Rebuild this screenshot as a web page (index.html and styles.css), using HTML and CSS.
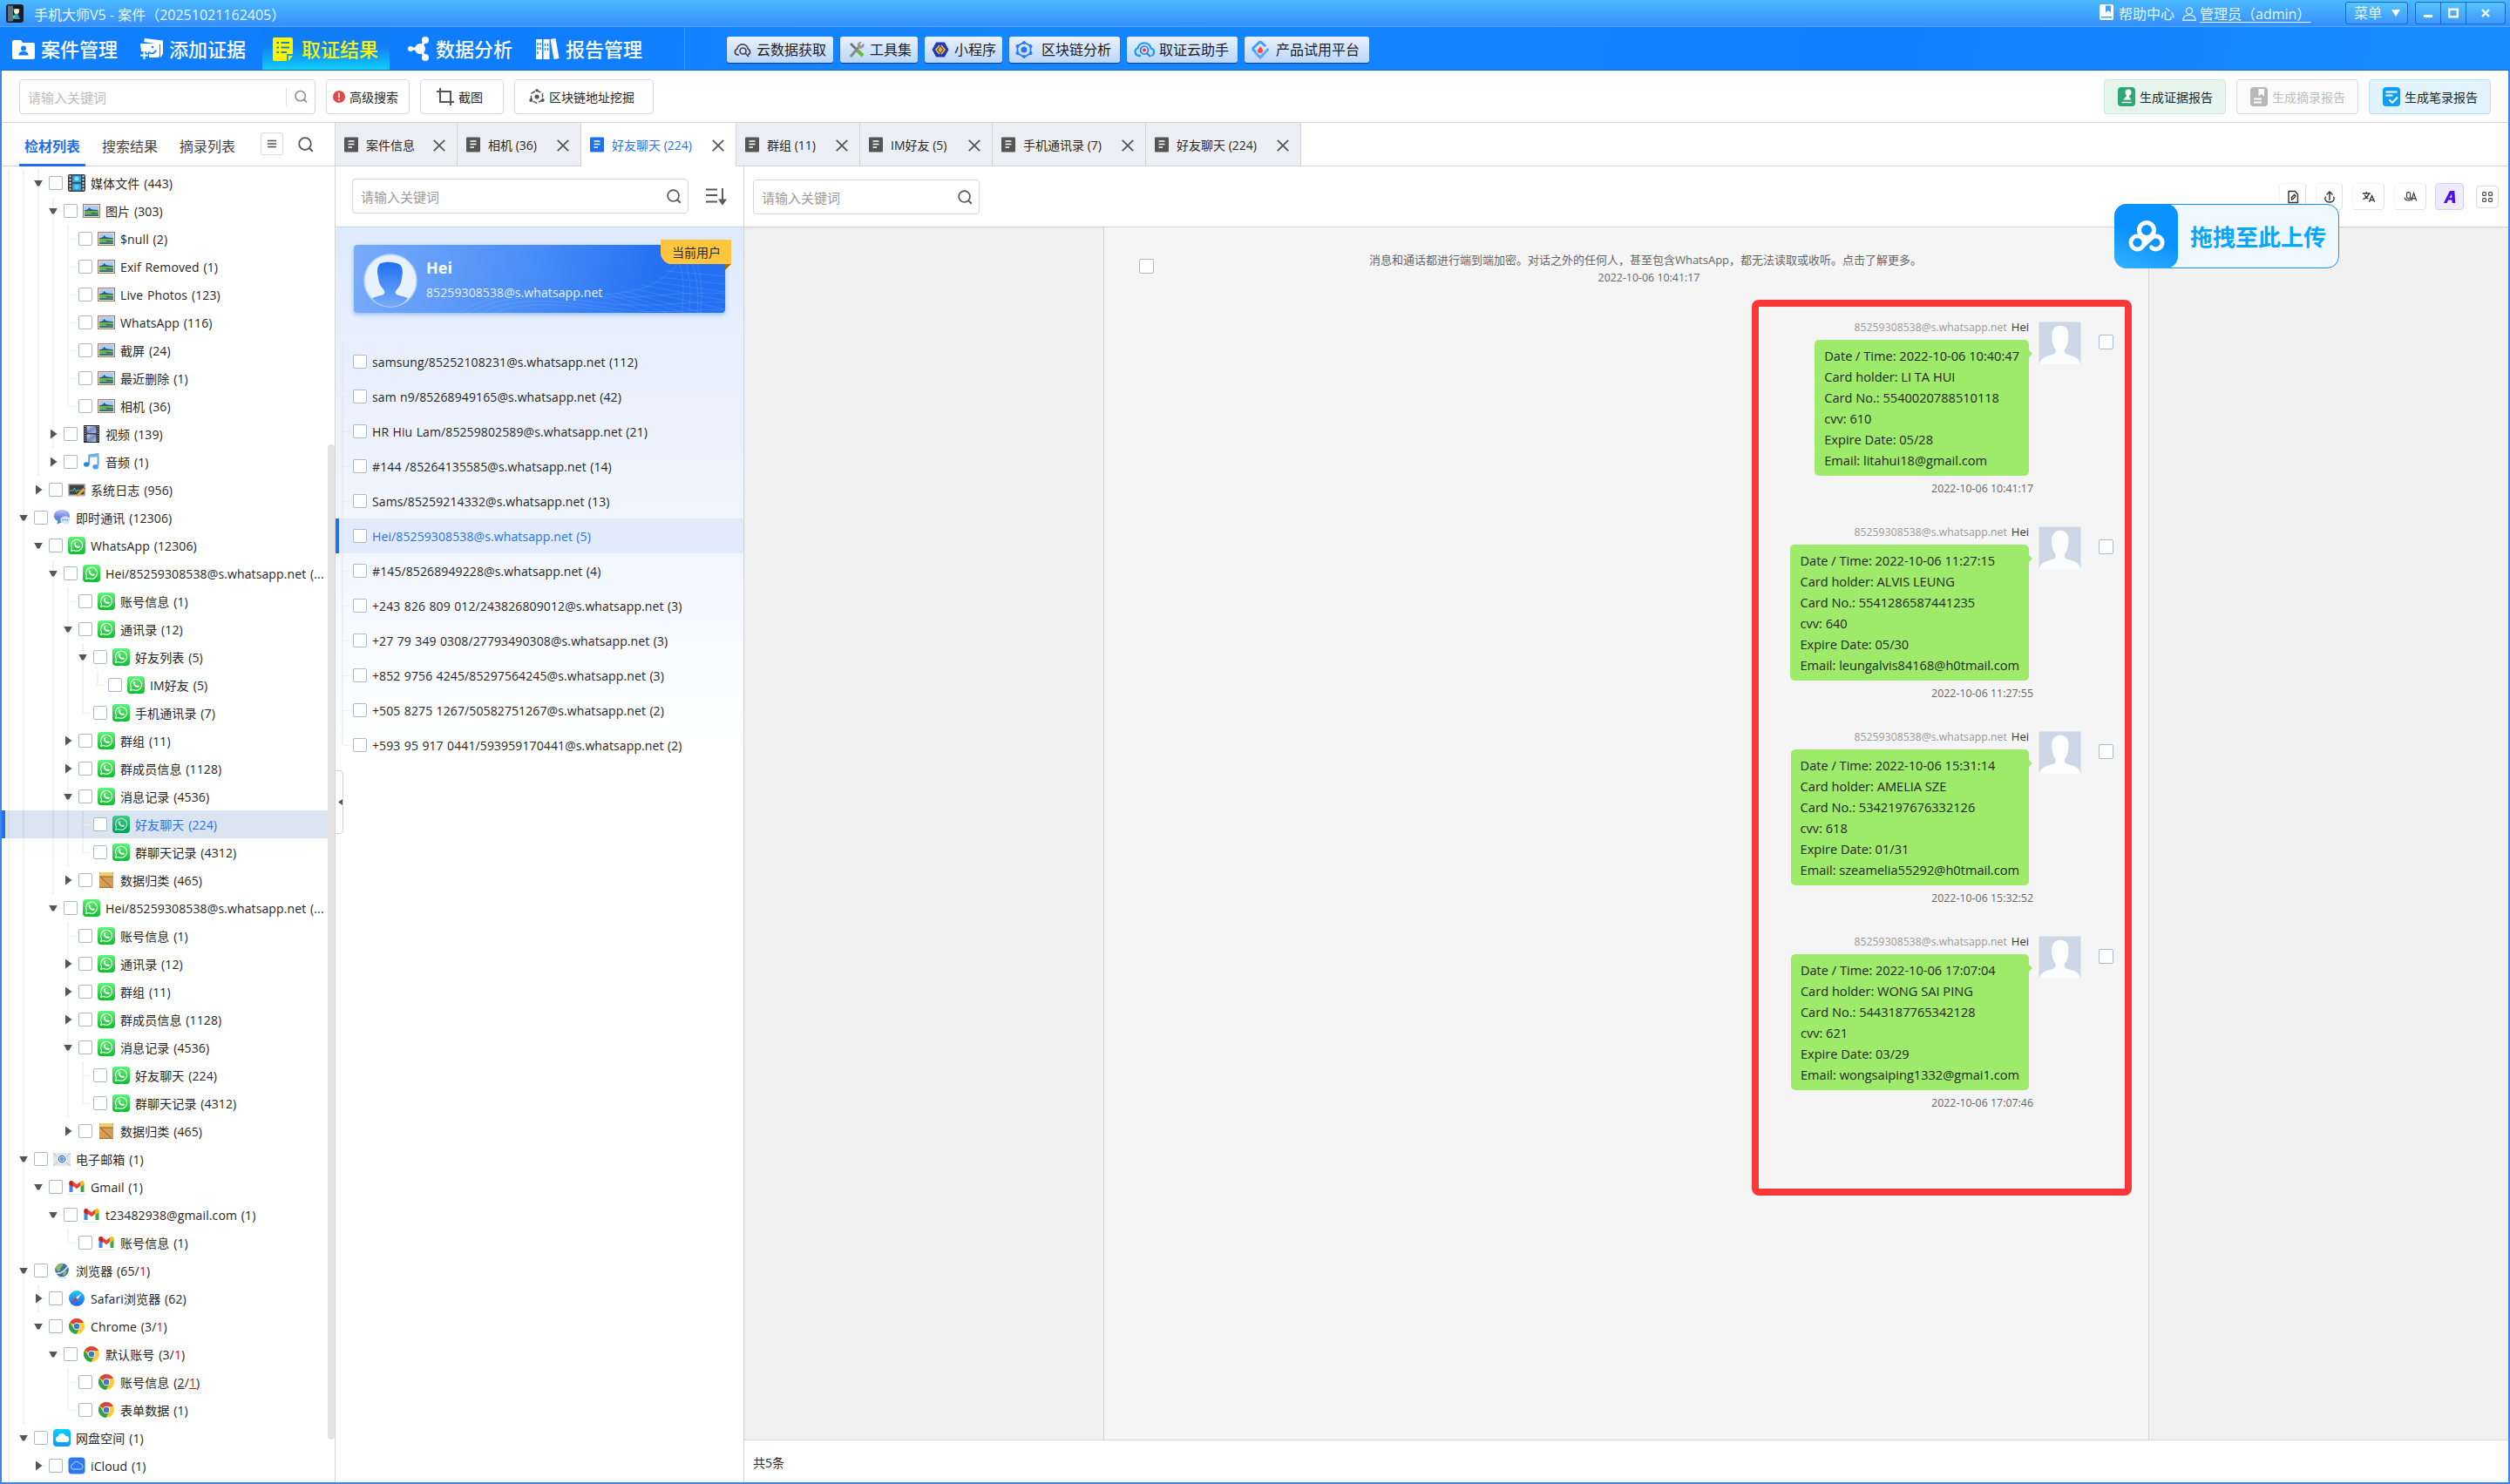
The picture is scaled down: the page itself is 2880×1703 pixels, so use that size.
FILE: index.html
```html
<!DOCTYPE html>
<html lang="zh-CN">
<head>
<meta charset="utf-8">
<title>手机大师V5</title>
<link rel="stylesheet" href="styles.css">
</head>
<body>
<svg class="defs" aria-hidden="true">
  <defs>
    <linearGradient id="gGreen" x1="0" y1="0" x2="0" y2="1"><stop offset="0" stop-color="#5df475"/><stop offset="1" stop-color="#0abf2c"/></linearGradient>
    <linearGradient id="gSafari" x1="0" y1="0" x2="0" y2="1"><stop offset="0" stop-color="#1fc8fb"/><stop offset="1" stop-color="#1d63ef"/></linearGradient>
    <linearGradient id="gCloud" x1="0" y1="0" x2="0" y2="1"><stop offset="0" stop-color="#00d2ff"/><stop offset="1" stop-color="#1296f5"/></linearGradient>
    <linearGradient id="gMan" x1="0" y1="0" x2="0" y2="1"><stop offset="0" stop-color="#1f70f2"/><stop offset="1" stop-color="#78abfb"/></linearGradient>
    <linearGradient id="gBubble" x1="0" y1="0" x2="0" y2="1"><stop offset="0" stop-color="#c3c6f7"/><stop offset=".5" stop-color="#6f86e0"/><stop offset="1" stop-color="#2f86d8"/></linearGradient>
    <linearGradient id="gFilm" x1="0" y1="0" x2="1" y2="1"><stop offset="0" stop-color="#dfe6f6"/><stop offset=".5" stop-color="#7389bd"/><stop offset="1" stop-color="#b9c6e6"/></linearGradient>
  </defs>
  <symbol id="wa" viewBox="0 0 20 20"><rect width="20" height="20" rx="4" fill="url(#gGreen)"/><path d="M3.600 16.400l.9-3.300a6.500 6.500 0 1 1 2.500 2.400z" fill="none" stroke="#fff" stroke-width="1.200" stroke-linejoin="round"/><path d="M7.700 6.300c.5-.3.9-.2 1.100.3l.5 1.200c.1.4-.6.9-.5 1.200.5 1 1.300 1.700 2.300 2.100.3.1.9-.9 1.200-.7l1.300.6c.4.2.2 1.100-.1 1.500-.6.7-1.800.8-3 .3-1.800-.8-3.500-2.500-3.800-4.300-.1-.9.4-1.900 1-2.200z" fill="#fff"/></symbol>
  <symbol id="pic" viewBox="0 0 20 20"><rect x=".5" y="2.500" width="19" height="15" fill="#cfe0ee" stroke="#ad7a5e"/><rect x="2" y="4" width="16" height="6" fill="#a9cdf3"/><path d="M2 9h2l2.500-1.500 1-1.500 1.500 1.800 3 .8 5.500.4v1H2z" fill="#35576f"/><rect x="2" y="10" width="16" height="6" fill="#69ae62"/><path d="M2 14.500h16V16H2zM11 11.800l7 1v.8H9z" fill="#2c6360"/></symbol>
  <symbol id="media" viewBox="0 0 20 20"><rect x="0" y="0" width="20" height="20" rx="2" fill="#3a3a3a"/><rect x="5" y="1.500" width="10" height="7.700" fill="#29a9ea"/><rect x="5" y="10.800" width="10" height="7.700" fill="#29a9ea"/><circle cx="10" cy="5" r="2.500" fill="#8fdcff"/><circle cx="10" cy="14.500" r="2.500" fill="#63c8fb"/><path d="M2.500 1.500v17M17.500 1.500v17" stroke="#e6e6e6" stroke-width="2" stroke-dasharray="2 1.700"/></symbol>
  <symbol id="video" viewBox="0 0 20 20"><rect x="1" y="0" width="18" height="20" fill="#1f2230"/><rect x="4.500" y="1" width="11" height="8.200" fill="url(#gFilm)"/><rect x="4.500" y="10.500" width="11" height="8.500" fill="url(#gFilm)"/><path d="M2.700 1v18M17.300 1v18" stroke="#fff" stroke-width="1" stroke-dasharray="1.300 1.300"/></symbol>
  <symbol id="audio" viewBox="0 0 20 20"><path d="M7.200 12.500V2.500L17.500 1v13" fill="none" stroke="#4aa0ec" stroke-width="1.800"/><path d="M7 2.500L17.800 1v3.200L7 5z" fill="#6bb8f4"/><ellipse cx="4.200" cy="13" rx="3.300" ry="2.700" fill="#2f83dd"/><ellipse cx="14.600" cy="15.800" rx="3.400" ry="2.800" fill="#4aa0ec"/></symbol>
  <symbol id="log" viewBox="0 0 20 20"><rect x="0" y="3" width="20" height="14.500" fill="#b9b9b9"/><rect x="1.500" y="4.500" width="17" height="11" fill="#3f4442"/><path d="M2 11h4l1.500-3 2 5 1.500-3 1 1h6" fill="none" stroke="#5fc0a0"/><path d="M9.500 18l1-3 7-7 2 2-7 7z" fill="#f0a63a"/><path d="M17.500 8l2 2 .5-1.500L18.500 7z" fill="#d55"/></symbol>
  <symbol id="im" viewBox="0 0 20 20"><path d="M10 1c5 0 9 2.600 9 6.800 0 4-3.500 6.700-8 6.900L4.500 17.500l.8-3.800C2.600 12.700.8 10.700.8 7.900.8 3.600 5 1 10 1z" fill="url(#gBubble)"/><path d="M13.800 8.500c3.500 0 5.700 1.600 5.700 4.100 0 1.500-.8 2.600-2 3.300l.8 2.700-3-1.800c-4 .3-7-1.200-7-4.200 0-2.500 2.300-4.100 5.500-4.100z" fill="#cfe3fa"/><path d="M10.500 12.600h1.500m1.200 0h1.500m1.200 0h1.500" stroke="#5a83c4" stroke-width="1.300"/></symbol>
  <symbol id="crate" viewBox="0 0 20 20"><rect x="2" y="1" width="16" height="18" fill="#d69c58"/><path d="M3 1h14l1 5H2z" fill="#f3cd68"/><path d="M2 6h16" stroke="#8d5a28" stroke-width="1"/><path d="M4 7l12 11.500" stroke="#8d5a28" stroke-width="1"/><path d="M2 18.500h16" stroke="#a56d31"/></symbol>
  <symbol id="mail" viewBox="0 0 20 20"><rect x="0" y="3" width="20" height="15" fill="#e4e7ea"/><path d="M0 3l8 8-8 7M20 3l-8 8 8 7" fill="none" stroke="#b6bcc2"/><path d="M5 6h10v8H5z" fill="#eef1f4"/><circle cx="10" cy="10" r="3.700" fill="none" stroke="#2f6fce" stroke-width="1.200"/><circle cx="10" cy="10" r="1.400" fill="none" stroke="#2f6fce" stroke-width="1.200"/></symbol>
  <symbol id="gmail" viewBox="0 0 20 20"><path d="M1.500 5v11h4V9z" fill="#4285f4"/><path d="M18.500 5v11h-4V9z" fill="#34a853"/><path d="M1.500 5.500C1.500 3 4 2.500 5.500 3.700L10 7.200l4.500-3.500v5L10 12.200 5.500 8.800v1.500l-4-3z" fill="#ea4335"/><path d="M14.500 3.700c1.500-1.200 4-.7 4 1.800v1.700l-4 3z" fill="#fbbc04"/><path d="M1.500 5.500C1.500 3 4 2.500 5.500 3.700v6.500l-4-3z" fill="#c5221f"/><path d="M0 18.500h20" stroke="#e8e8e8" stroke-width="1"/></symbol>
  <symbol id="globe" viewBox="0 0 20 20"><circle cx="10" cy="9.500" r="7.800" fill="#3b6fa5"/><path d="M3 6c2-4 6-5 8-4 1 2-1 3-2 5s-1 4-3 4-3-3-3-5zM12 10l4 1-2 4-3 1z" fill="#8fb868"/><path d="M3 13c5 1 10-2 14-8" fill="none" stroke="#dbe9f5" stroke-width="1.500"/><ellipse cx="10" cy="18" rx="5" ry="1" fill="#d5dbe2"/></symbol>
  <symbol id="safari" viewBox="0 0 20 20"><circle cx="10" cy="10" r="9" fill="url(#gSafari)"/><path d="M16 4l-5 7-2-2z" fill="#fff"/><path d="M4 16l5-7 2 2z" fill="#f22"/></symbol>
  <symbol id="chrome" viewBox="0 0 20 20"><circle cx="10" cy="10" r="9" fill="#fc3"/><path d="M10 10L2.200 5.500A9 9 0 0 1 17.800 5.500V6H10z" fill="#db4437"/><path d="M10 10l-3.600 2L2.200 5.500A9 9 0 0 0 9.500 19l3.900-7z" fill="#2fa24c"/><circle cx="10" cy="10" r="4.300" fill="#f4f4f4"/><circle cx="10" cy="10" r="3.300" fill="#3f78c8"/></symbol>
  <symbol id="pan" viewBox="0 0 20 20"><rect width="20" height="20" rx="4" fill="url(#gCloud)"/><path d="M6 15a3.400 3.400 0 0 1-.3-6.700A4.700 4.700 0 0 1 14.500 8 3.500 3.500 0 0 1 15 15z" fill="#fff"/></symbol>
  <symbol id="icloud" viewBox="0 0 20 20"><rect width="19" height="19" x=".5" y=".5" rx="4" fill="#2d78f0"/><path d="M6 14a2.900 2.900 0 0 1-.3-5.700A4.200 4.200 0 0 1 13.500 7.500 3.300 3.300 0 0 1 14.500 14z" fill="none" stroke="#b9d5ff"/></symbol>
  <symbol id="doc" viewBox="0 0 16 18"><rect y=".5" width="16" height="17" rx="1" fill="currentColor"/><path d="M4.500 5h7M4.500 8.500h7M4.500 12h4.500" stroke="#fff" stroke-width="1.500"/></symbol>
  <symbol id="x" viewBox="0 0 14 14"><path d="M.8.8l12.400 12.400M13.200.8L.8 13.200" stroke="#595959" stroke-width="1.900"/></symbol>
  <symbol id="mag" viewBox="0 0 18 18"><circle cx="8" cy="8" r="6.800" fill="none" stroke="currentColor" stroke-width="1.800"/><path d="M12.500 12.500l4.200 4.200" stroke="currentColor" stroke-width="2"/></symbol>
  <symbol id="man" viewBox="0 0 49 49"><rect x=".5" y=".5" width="48" height="48" fill="#cdd7e6" rx="1"/><path d="M1 49c.5-6 6-9 15-11 3-1 4.500-3 3.500-6-2.500-3-3.500-6-4-10.500-.6-6-.5-11 3-14.500 3.500-3 9.500-3 13 0 3.500 3.500 3.200 9 2.500 14.500-.5 4.500-1.500 7.500-4 10.500-1 3 .5 5 3.500 6 9 2 14.500 5 14.500 11z" fill="#fcfdff"/></symbol>
</svg>

<div class="app">
  <header class="titlebar">
    <svg class="logo" viewBox="0 0 20 21"><rect width="20" height="21" rx="3" fill="#111c28"/><rect x="2" y="1.500" width="6" height="18" fill="#5b6f80"/><path d="M8 5h8l-3 5 3 7H7l3-6z" fill="#2f9bb8"/><circle cx="12" cy="8" r="3" fill="#f5e9c0"/><circle cx="9" cy="14" r="1.600" fill="#7bd35a"/></svg>
    <span class="title">手机大师V5 - 案件（20251021162405）</span>
    <div class="account">
      <svg class="book" viewBox="0 0 16 18"><path d="M2 0h12a2 2 0 0 1 2 2v14a2 2 0 0 1-2 2H2a2 2 0 0 1-2-2V2a2 2 0 0 1 2-2z" fill="#fff"/><path d="M7 1.500h6v8l-3-2.500-3 2.500zM2 14h12v1.500H2z" fill="#3f9bff"/></svg>
      <span class="help">帮助中心</span>
      <svg class="user" viewBox="0 0 16 16"><circle cx="8" cy="4.500" r="3.600" fill="none" stroke="#d7ebff" stroke-width="1.400"/><path d="M.8 15.200c0-4 2.500-6 7.200-6s7.200 2 7.200 6z" fill="none" stroke="#d7ebff" stroke-width="1.400"/></svg>
      <span class="admin">管理员（admin）</span>
    </div>
    <div class="menu">菜单<i></i></div>
    <div class="winbtns"><span><svg viewBox="0 0 12 12"><path d="M1 9.500h10" stroke="#fff" stroke-width="3"/></svg></span><span><svg viewBox="0 0 12 12"><rect x="1.200" y="1.700" width="9.600" height="8.600" fill="none" stroke="#fff" stroke-width="2.400"/></svg></span><span class="wide"><svg viewBox="0 0 12 12"><path d="M2 2l8 8M10 2l-8 8" stroke="#fff" stroke-width="2.300"/></svg></span></div>
  </header>

  <nav class="nav">
    <div class="main m1"><svg viewBox="0 0 26 24"><path d="M2 2h8l2 3h12a2 2 0 0 1 2 2v15a2 2 0 0 1-2 2H2a2 2 0 0 1-2-2V4a2 2 0 0 1 2-2z" fill="#fff"/><circle cx="13" cy="11.500" r="3" fill="#1182fa"/><path d="M7.500 19.500c0-3.500 2-4.500 5.500-4.500s5.500 1 5.500 4.500z" fill="#1182fa"/></svg>案件管理</div>
    <div class="main m2"><svg viewBox="0 0 28 25"><path d="M6 0l21 2.500v15l-3 5V7L5 4z" fill="#fff"/><path d="M1 6l20 0q2 0 2 2v12q0 2-2 2H11v-5H8v-2H2z" fill="#fff"/><circle cx="15" cy="10" r="1.300" fill="#1182fa"/><path d="M10 15.500c4 3 7 2 9.500-2" stroke="#1182fa" stroke-width="1.600" fill="none"/><path d="M5.500 15v9M1 19.500h9" stroke="#fff" stroke-width="2"/></svg>添加证据</div>
    <div class="main m3 active"><svg viewBox="0 0 23 27"><path d="M2 0h19a2 2 0 0 1 2 2v17h-7v8H2a2 2 0 0 1-2-2V2a2 2 0 0 1 2-2zM18 21h5l-5 6z" fill="#fdf500"/><path d="M4.500 6h2.500M9.500 6H19M4.500 11.500h2.500M9.500 11.500H19M4.500 17h2.500M9.500 17H16" stroke="#1a80e8" stroke-width="2"/></svg>取证结果</div>
    <div class="main m4"><svg viewBox="0 0 26 28"><circle cx="14" cy="14" r="6" fill="#fff"/><circle cx="3" cy="14" r="3" fill="#fff"/><circle cx="20" cy="4" r="4" fill="#fff"/><circle cx="20" cy="24" r="4" fill="#fff"/><path d="M3 14h9M14 14l6-10M14 14l6 10" stroke="#fff" stroke-width="3"/></svg>数据分析</div>
    <div class="main m5"><svg viewBox="0 0 26 23"><path d="M0 0h7v23H0zM8.500 0h7v23h-7zM16.500 0l6-1 4 23-6 1z" fill="#fff"/><path d="M2 4v3M5 4v3M2 9v3M5 9v3M2 14v3M10.500 5v3M13.500 5v3M10.500 10v3M13.500 10v3" stroke="#1182fa" stroke-width="1.400"/></svg>报告管理</div>
    <div class="tools">
      <div class="tool t1"><svg viewBox="0 0 20 20"><path d="M6 16H4.500a3.500 3.500 0 0 1-.8-6.800 6.400 6.400 0 0 1 12.600 0 3.500 3.500 0 0 1 0 6.600" fill="none" stroke="#444" stroke-width="1.700"/><circle cx="10.500" cy="11.500" r="3.500" fill="none" stroke="#444" stroke-width="1.700"/><path d="M13 14l4 4" stroke="#444" stroke-width="1.700"/></svg>云数据获取</div>
      <div class="tool t2"><svg viewBox="0 0 20 20"><path d="M3 3l8 8" stroke="#6b6e70" stroke-width="2.500"/><path d="M11 11l6 6" stroke="#63b92f" stroke-width="4"/><path d="M3 18L14 5" stroke="#888" stroke-width="3"/><path d="M18 2.500l-3 3-1.500-1.500 2.500-3a4 4 0 1 0 2 1.500z" fill="#999"/></svg>工具集</div>
      <div class="tool t3"><svg viewBox="0 0 20 20"><path d="M5 1h10l5 9-5 9H5L0 10z" fill="#1e38b8" stroke="#cfe0ff"/><path d="M9 5l-4 5 4 5M11 5l4 5-4 5M10 8l-1.500 2 1.500 2 1.500-2z" fill="none" stroke="#ffb91f" stroke-width="1.700"/></svg>小程序</div>
      <div class="tool t4"><svg viewBox="0 0 20 20"><path d="M10 1.500l7.500 4.300v8.500L10 18.500l-7.500-4.300V5.800z" fill="none" stroke="#2b77ef" stroke-width="1.700"/><circle cx="10" cy="10" r="3.500" fill="#2b77ef"/><g fill="#2b77ef"><circle cx="10" cy="2" r="1.900"/><circle cx="17.500" cy="6" r="2"/><circle cx="17.500" cy="14" r="2"/><circle cx="10" cy="18" r="1.900"/><circle cx="2.500" cy="14" r="2"/><circle cx="2.500" cy="6" r="2"/></g></svg>区块链分析</div>
      <div class="tool t5"><svg viewBox="0 0 24 20"><path d="M8 17H6a4.500 4.500 0 0 1-1.500-8.700 7.700 7.700 0 0 1 15 0A4.500 4.500 0 0 1 20 17" fill="none" stroke="#1c9df0" stroke-width="2.300"/><circle cx="12" cy="10.500" r="4.500" fill="none" stroke="#2b77ef" stroke-width="1.700"/><circle cx="12" cy="10.500" r="2" fill="#e6403c"/><path d="M15 14l4 4" stroke="#2b77ef" stroke-width="2"/></svg>取证云助手</div>
      <div class="tool t6"><svg viewBox="0 0 22 20"><path d="M11 .5L17 6M11 .5L2 9M2 9l4 4" fill="none" stroke="#3f9ff5" stroke-width="3"/><path d="M5 13l6 6 9.500-10" fill="none" stroke="#5fa8f5" stroke-width="3"/><path d="M11 6c2 2.500 3 3.500 3 5a3 3 0 0 1-6 0c0-1.500 2-2.500 3-5z" fill="#ee4b3a"/></svg>产品试用平台</div>
    </div>
  </nav>

  <div class="toolbar">
    <div class="field global"><span>请输入关键词</span><svg class="mag"><use href="#mag"/></svg></div>
    <div class="btn b1"><svg viewBox="0 0 14 14"><circle cx="7" cy="7" r="7" fill="#e24848"/><path d="M7 2.500v5.500M7 9.500v2" stroke="#fff" stroke-width="1.600"/></svg>高级搜索</div>
    <div class="btn b2"><svg viewBox="0 0 20 20"><path d="M4 0v16h16M0 4h16v16" fill="none" stroke="#555" stroke-width="2"/></svg>截图</div>
    <div class="btn b3"><svg viewBox="0 0 18 18"><path d="M9 1.500l6.500 3.800v7.500L9 16.500l-6.500-3.700V5.300z" fill="none" stroke="#555" stroke-width="1.500" stroke-dasharray="5 2.500"/><circle cx="9" cy="9" r="2.600" fill="#555"/><g fill="#555"><circle cx="9" cy="1.800" r="1.700"/><circle cx="2.300" cy="13" r="2"/><circle cx="15.700" cy="13" r="2"/></g></svg>区块链地址挖掘</div>
    <div class="reports">
      <div class="rep green"><svg viewBox="0 0 20 22"><rect width="20" height="22" rx="4" fill="#2fa873"/><circle cx="12" cy="6" r="3.500" fill="#fff"/><path d="M10.500 8h3l-.5 3 2.500 3.500H6L9.500 11z" fill="#fff"/><path d="M4.500 17.500h11" stroke="#fff" stroke-width="1.300"/></svg>生成证据报告</div>
      <div class="rep off"><svg viewBox="0 0 20 22"><rect width="20" height="22" rx="4" fill="#b8b8b8"/><path d="M9.500 2h6.500v8.500L12.700 8 9.500 10.500z" fill="#fff"/><path d="M4 13.500h9M4 17.500h9" stroke="#fff" stroke-width="1.800"/></svg>生成摘录报告</div>
      <div class="rep blue"><svg viewBox="0 0 20 22"><rect width="20" height="22" rx="4" fill="#109ff5"/><path d="M3.500 5.500h13M3.500 9.500h8M7.500 14.500l3.500 3.500 6-6.500" fill="none" stroke="#fff" stroke-width="1.900"/></svg>生成笔录报告</div>
    </div>
  </div>

  <main class="body">
    <aside class="side">
      <div class="sidetabs">
        <span class="on">检材列表</span><span>搜索结果</span><span>摘录列表</span>
        <i class="listbtn"><svg viewBox="0 0 10 10"><path d="M0 1.500h10M0 5h10M0 8.500h10" stroke="#555" stroke-width="1.300"/></svg></i>
        <svg class="mag"><use href="#mag"/></svg>
      </div>
      <div class="tree">
        <ul class="d1">
          <li><ul class="d2">
            <li><div class="row open"><i class="tw"></i><i class="cb"></i><svg><use href="#media"/></svg><span>媒体文件 (443)</span></div>
              <ul class="d3">
                <li><div class="row open"><i class="tw"></i><i class="cb"></i><svg><use href="#pic"/></svg><span>图片 (303)</span></div>
                  <ul class="d4">
                    <li><div class="row"><i class="tw"></i><i class="cb"></i><svg><use href="#pic"/></svg><span>$null (2)</span></div></li>
                    <li><div class="row"><i class="tw"></i><i class="cb"></i><svg><use href="#pic"/></svg><span>Exif Removed (1)</span></div></li>
                    <li><div class="row"><i class="tw"></i><i class="cb"></i><svg><use href="#pic"/></svg><span>Live Photos (123)</span></div></li>
                    <li><div class="row"><i class="tw"></i><i class="cb"></i><svg><use href="#pic"/></svg><span>WhatsApp (116)</span></div></li>
                    <li><div class="row"><i class="tw"></i><i class="cb"></i><svg><use href="#pic"/></svg><span>截屏 (24)</span></div></li>
                    <li><div class="row"><i class="tw"></i><i class="cb"></i><svg><use href="#pic"/></svg><span>最近删除 (1)</span></div></li>
                    <li class="end"><div class="row"><i class="tw"></i><i class="cb"></i><svg><use href="#pic"/></svg><span>相机 (36)</span></div></li>
                  </ul></li>
                <li><div class="row shut"><i class="tw"></i><i class="cb"></i><svg><use href="#video"/></svg><span>视频 (139)</span></div></li>
                <li><div class="row shut"><i class="tw"></i><i class="cb"></i><svg><use href="#audio"/></svg><span>音频 (1)</span></div></li>
              </ul></li>
            <li><div class="row shut"><i class="tw"></i><i class="cb"></i><svg><use href="#log"/></svg><span>系统日志 (956)</span></div></li>
          </ul></li>
          <li><div class="row open"><i class="tw"></i><i class="cb"></i><svg><use href="#im"/></svg><span>即时通讯 (12306)</span></div>
            <ul class="d2">
              <li><div class="row open"><i class="tw"></i><i class="cb"></i><svg><use href="#wa"/></svg><span>WhatsApp (12306)</span></div>
                <ul class="d3">
                  <li><div class="row open"><i class="tw"></i><i class="cb"></i><svg><use href="#wa"/></svg><span>Hei/85259308538@s.whatsapp.net (...</span></div>
                    <ul class="d4">
                      <li><div class="row"><i class="tw"></i><i class="cb"></i><svg><use href="#wa"/></svg><span>账号信息 (1)</span></div></li>
                      <li><div class="row open"><i class="tw"></i><i class="cb"></i><svg><use href="#wa"/></svg><span>通讯录 (12)</span></div>
                        <ul class="d5">
                          <li><div class="row open"><i class="tw"></i><i class="cb"></i><svg><use href="#wa"/></svg><span>好友列表 (5)</span></div>
                            <ul class="d6"><li class="end"><div class="row"><i class="tw"></i><i class="cb"></i><svg><use href="#wa"/></svg><span>IM好友 (5)</span></div></li></ul></li>
                          <li class="end"><div class="row"><i class="tw"></i><i class="cb"></i><svg><use href="#wa"/></svg><span>手机通讯录 (7)</span></div></li>
                        </ul></li>
                      <li><div class="row shut"><i class="tw"></i><i class="cb"></i><svg><use href="#wa"/></svg><span>群组 (11)</span></div></li>
                      <li><div class="row shut"><i class="tw"></i><i class="cb"></i><svg><use href="#wa"/></svg><span>群成员信息 (1128)</span></div></li>
                      <li><div class="row open"><i class="tw"></i><i class="cb"></i><svg><use href="#wa"/></svg><span>消息记录 (4536)</span></div>
                        <ul class="d5">
                          <li><div class="row sel"><i class="tw"></i><i class="cb"></i><svg><use href="#wa"/></svg><span>好友聊天 (224)</span></div></li>
                          <li class="end"><div class="row"><i class="tw"></i><i class="cb"></i><svg><use href="#wa"/></svg><span>群聊天记录 (4312)</span></div></li>
                        </ul></li>
                      <li><div class="row shut"><i class="tw"></i><i class="cb"></i><svg><use href="#crate"/></svg><span>数据归类 (465)</span></div></li>
                    </ul></li>
                  <li><div class="row open"><i class="tw"></i><i class="cb"></i><svg><use href="#wa"/></svg><span>Hei/85259308538@s.whatsapp.net (...</span></div>
                    <ul class="d4">
                      <li><div class="row"><i class="tw"></i><i class="cb"></i><svg><use href="#wa"/></svg><span>账号信息 (1)</span></div></li>
                      <li><div class="row shut"><i class="tw"></i><i class="cb"></i><svg><use href="#wa"/></svg><span>通讯录 (12)</span></div></li>
                      <li><div class="row shut"><i class="tw"></i><i class="cb"></i><svg><use href="#wa"/></svg><span>群组 (11)</span></div></li>
                      <li><div class="row shut"><i class="tw"></i><i class="cb"></i><svg><use href="#wa"/></svg><span>群成员信息 (1128)</span></div></li>
                      <li><div class="row open"><i class="tw"></i><i class="cb"></i><svg><use href="#wa"/></svg><span>消息记录 (4536)</span></div>
                        <ul class="d5">
                          <li><div class="row"><i class="tw"></i><i class="cb"></i><svg><use href="#wa"/></svg><span>好友聊天 (224)</span></div></li>
                          <li class="end"><div class="row"><i class="tw"></i><i class="cb"></i><svg><use href="#wa"/></svg><span>群聊天记录 (4312)</span></div></li>
                        </ul></li>
                      <li><div class="row shut"><i class="tw"></i><i class="cb"></i><svg><use href="#crate"/></svg><span>数据归类 (465)</span></div></li>
                    </ul></li>
                </ul></li>
            </ul></li>
          <li><div class="row open"><i class="tw"></i><i class="cb"></i><svg><use href="#mail"/></svg><span>电子邮箱 (1)</span></div>
            <ul class="d2"><li><div class="row open"><i class="tw"></i><i class="cb"></i><svg><use href="#gmail"/></svg><span>Gmail (1)</span></div>
              <ul class="d3"><li><div class="row open"><i class="tw"></i><i class="cb"></i><svg><use href="#gmail"/></svg><span>t23482938@gmail.com (1)</span></div>
                <ul class="d4"><li class="end"><div class="row"><i class="tw"></i><i class="cb"></i><svg><use href="#gmail"/></svg><span>账号信息 (1)</span></div></li></ul></li></ul></li></ul></li>
          <li><div class="row open"><i class="tw"></i><i class="cb"></i><svg><use href="#globe"/></svg><span>浏览器 (65/<em>1</em>)</span></div>
            <ul class="d2">
              <li><div class="row shut"><i class="tw"></i><i class="cb"></i><svg><use href="#safari"/></svg><span>Safari浏览器 (62)</span></div></li>
              <li><div class="row open"><i class="tw"></i><i class="cb"></i><svg><use href="#chrome"/></svg><span>Chrome (3/<em>1</em>)</span></div>
                <ul class="d3"><li><div class="row open"><i class="tw"></i><i class="cb"></i><svg><use href="#chrome"/></svg><span>默认账号 (3/<em>1</em>)</span></div>
                  <ul class="d4">
                    <li><div class="row"><i class="tw"></i><i class="cb"></i><svg><use href="#chrome"/></svg><span>账号信息 (<u>2</u>/<em><u>1</u></em>)</span></div></li>
                    <li class="end"><div class="row"><i class="tw"></i><i class="cb"></i><svg><use href="#chrome"/></svg><span>表单数据 (1)</span></div></li>
                  </ul></li></ul></li>
            </ul></li>
          <li><div class="row open"><i class="tw"></i><i class="cb"></i><svg><use href="#pan"/></svg><span>网盘空间 (1)</span></div>
            <ul class="d2"><li><div class="row shut"><i class="tw"></i><i class="cb"></i><svg><use href="#icloud"/></svg><span>iCloud (1)</span></div></li></ul></li>
        </ul>
        <i class="scroll"></i>
      </div>
    </aside>

    <section class="work">
      <div class="tabs">
        <div class="tab w140"><svg class="doc"><use href="#doc"/></svg>案件信息<svg class="x"><use href="#x"/></svg></div>
        <div class="tab w142"><svg class="doc"><use href="#doc"/></svg>相机 (36)<svg class="x"><use href="#x"/></svg></div>
        <div class="tab w178 on"><svg class="doc"><use href="#doc"/></svg>好友聊天 (224)<svg class="x"><use href="#x"/></svg></div>
        <div class="tab w142"><svg class="doc"><use href="#doc"/></svg>群组 (11)<svg class="x"><use href="#x"/></svg></div>
        <div class="tab w152"><svg class="doc"><use href="#doc"/></svg>IM好友 (5)<svg class="x"><use href="#x"/></svg></div>
        <div class="tab w176"><svg class="doc"><use href="#doc"/></svg>手机通讯录 (7)<svg class="x"><use href="#x"/></svg></div>
        <div class="tab w178"><svg class="doc"><use href="#doc"/></svg>好友聊天 (224)<svg class="x"><use href="#x"/></svg></div>
        <div class="rest"></div>
      </div>
      <div class="panes">
        <div class="contacts">
          <div class="chead">
            <div class="field"><span>请输入关键词</span><svg class="mag"><use href="#mag"/></svg></div>
            <svg class="sort" viewBox="0 0 23 20"><path d="M0 2.500h13M0 9h13M0 16.500h13" stroke="#595959" stroke-width="1.900"/><path d="M19 1v17M15.800 14.500h6.400L19 19z" stroke="#595959" stroke-width="1.900" fill="#595959"/></svg>
          </div>
          <div class="clist">
            <div class="card">
              <svg class="waves" viewBox="0 0 426 78" fill="none" stroke="#fff" stroke-opacity=".1"><path d="M200 53c60 6 120 8 150-12s22-30 40-40M120 78c60-35 120-20 170-18s90-8 136-4M130 78c60-30 120-14 170-10s80-4 126-2M145 78c50-24 110-10 160-4s80 0 121 0M160 78c50-18 100-6 150 0M280 58l60 20M290 56l70 22M300 55l80 23M310 53l90 25M320 50l106 24M330 46l96 18M340 42l86 12M350 37l76 8M358 30l68 6M364 20l62 2M372 14q10 30 4 64M378 12q12 30 6 66M384 10q14 30 10 68M390 8q12 30 8 70"/></svg>
              <svg class="face" viewBox="0 0 62 62"><circle cx="31" cy="31" r="30" fill="#e8f1fe" stroke="#b7d3fc" stroke-width="1.500"/><path d="M10 51.500c5-3 10-3 13-4.500 2-2 1.500-4 0-6-4-4-5.500-8-6-14-1.500-5-1.500-12 2-15.500 8-3 17-1.500 22.500 1 4 3 4 10 2.500 15-.5 6-2 10-6 14-1.500 2-2 4 0 5.500 4 2 8 1.500 13 4.500q-8 9.500-20 9.500t-21-9.500z" fill="url(#gMan)"/></svg>
              <div class="who"><b>Hei</b><span>85259308538@s.whatsapp.net</span></div>
              <div class="badge">当前用户</div>
            </div>
            <ul class="people">
              <li><i class="cb"></i><span>samsung/85252108231@s.whatsapp.net (112)</span></li>
              <li><i class="cb"></i><span>sam n9/85268949165@s.whatsapp.net (42)</span></li>
              <li><i class="cb"></i><span>HR Hiu Lam/85259802589@s.whatsapp.net (21)</span></li>
              <li><i class="cb"></i><span>#144 /85264135585@s.whatsapp.net (14)</span></li>
              <li><i class="cb"></i><span>Sams/85259214332@s.whatsapp.net (13)</span></li>
              <li class="sel"><i class="cb"></i><span>Hei/85259308538@s.whatsapp.net (5)</span></li>
              <li><i class="cb"></i><span>#145/85268949228@s.whatsapp.net (4)</span></li>
              <li><i class="cb"></i><span>+243 826 809 012/243826809012@s.whatsapp.net (3)</span></li>
              <li><i class="cb"></i><span>+27 79 349 0308/27793490308@s.whatsapp.net (3)</span></li>
              <li><i class="cb"></i><span>+852 9756 4245/85297564245@s.whatsapp.net (3)</span></li>
              <li><i class="cb"></i><span>+505 8275 1267/50582751267@s.whatsapp.net (2)</span></li>
              <li class="end"><i class="cb"></i><span>+593 95 917 0441/593959170441@s.whatsapp.net (2)</span></li>
            </ul>
            <i class="handle"></i>
          </div>
        </div>

        <div class="chat">
          <div class="chathead">
            <div class="field"><span>请输入关键词</span><svg class="mag"><use href="#mag"/></svg></div>
            <div class="acts">
              <i class="act a1"><svg viewBox="0 0 16 16"><path d="M3 1.500h7.500L13.500 5v9.500H3zM6.500 11V8.500l3-3 1.500 1.500-3 3.500z" fill="none" stroke="#333" stroke-width="1.400"/></svg></i>
              <i class="act a2"><svg viewBox="0 0 16 16"><path d="M8 12V2M4.500 5.500L8 2l3.500 3.500M3.500 7.500C1.500 11 4 14 8 14s6.500-3 4.500-6.500" fill="none" stroke="#333" stroke-width="1.400"/></svg></i>
              <i class="act a3"><svg viewBox="0 0 18 16"><path d="M1 3.500h10M6 1.500v2M9 4c-1 3-4 5.500-7.500 7M3.500 5.500c1 2 3 4 5 5M9.500 14.500l3.500-8 3.500 8M10.800 12h4.400" fill="none" stroke="#333" stroke-width="1.500"/></svg></i>
              <i class="act a4"><svg viewBox="0 0 18 16"><rect x="4" y="2" width="4.500" height="8" rx="2" fill="none" stroke="#444" stroke-width="1.400"/><path d="M1.500 8.500c0 5 8 5.500 8 0M10 13l3-10 3.500 10M11 10h5" fill="none" stroke="#444" stroke-width="1.500"/></svg></i>
              <i class="act a5"><svg viewBox="0 0 16 18"><path d="M0 17L8 1h6l1 16h-4l-.3-4H6l-1.800 4zM7.500 10h3l-.2-5z" fill="#4b10ef" fill-rule="evenodd"/></svg></i>
              <i class="act a6"><svg viewBox="0 0 12 12"><g fill="none" stroke="#444" stroke-width="1.100"><rect x=".6" y=".6" width="3.800" height="3.800" rx="1"/><rect x="7.600" y=".6" width="3.800" height="3.800" rx="1"/><rect x=".6" y="7.600" width="3.800" height="3.800" rx="1"/><rect x="7.600" y="7.600" width="3.800" height="3.800" rx="1"/></g></svg></i>
            </div>
          </div>
          <div class="stage">
            <div class="thread">
              <div class="notice"><i class="cb big"></i><p>消息和通话都进行端到端加密。对话之外的任何人，甚至包含WhatsApp，都无法读取或收听。点击了解更多。</p><time>2022-10-06 10:41:17</time></div>
              <div class="msg"><div class="col"><div class="from"><span>85259308538@s.whatsapp.net</span>Hei</div><div class="bubble">Date / Time: 2022-10-06 10:40:47<br>Card holder: LI TA HUI<br>Card No.: 5540020788510118<br>cvv: 610<br>Expire Date: 05/28<br>Email: litahui18@gmail.com</div><time>2022-10-06 10:41:17</time></div><svg class="man"><use href="#man"/></svg><i class="cb big"></i></div>
              <div class="msg"><div class="col"><div class="from"><span>85259308538@s.whatsapp.net</span>Hei</div><div class="bubble">Date / Time: 2022-10-06 11:27:15<br>Card holder: ALVIS LEUNG<br>Card No.: 5541286587441235<br>cvv: 640<br>Expire Date: 05/30<br>Email: leungalvis84168@h0tmail.com</div><time>2022-10-06 11:27:55</time></div><svg class="man"><use href="#man"/></svg><i class="cb big"></i></div>
              <div class="msg"><div class="col"><div class="from"><span>85259308538@s.whatsapp.net</span>Hei</div><div class="bubble">Date / Time: 2022-10-06 15:31:14<br>Card holder: AMELIA SZE<br>Card No.: 5342197676332126<br>cvv: 618<br>Expire Date: 01/31<br>Email: szeamelia55292@h0tmail.com</div><time>2022-10-06 15:32:52</time></div><svg class="man"><use href="#man"/></svg><i class="cb big"></i></div>
              <div class="msg"><div class="col"><div class="from"><span>85259308538@s.whatsapp.net</span>Hei</div><div class="bubble">Date / Time: 2022-10-06 17:07:04<br>Card holder: WONG SAI PING<br>Card No.: 5443187765342128<br>cvv: 621<br>Expire Date: 03/29<br>Email: wongsaiping1332@gmai1.com</div><time>2022-10-06 17:07:46</time></div><svg class="man"><use href="#man"/></svg><i class="cb big"></i></div>
            </div>
          </div>
          <footer class="count">共5条</footer>
        </div>
      </div>
    </section>
  </main>
  <div class="marker"></div>
  <div class="upload"><div class="pan"><svg viewBox="0 0 42 38"><g fill="none" stroke="#fff" stroke-width="5" stroke-linecap="round"><circle cx="21" cy="12" r="8.500"/><circle cx="10.500" cy="26.500" r="7.500"/><path d="M25.500 22a7.500 7.500 0 1 1 1 10"/></g><path d="M15 31l12-11" stroke="#fff" stroke-width="6"/><circle cx="10.500" cy="26.500" r="5" fill="#0a92ff"/></svg></div><span>拖拽至此上传</span></div>
</div>
</body>
</html>
```
FILE: styles.css
```css
* { box-sizing: border-box; }
html, body { margin: 0; padding: 0; }
body { font-family: "Open Sans", "Noto Sans CJK SC", sans-serif; font-size: 14px; color: #262626; background: #fff; overflow: hidden; }
ul { list-style: none; margin: 0; padding: 0; }
i, em { font-style: normal; }
svg { display: block; flex: none; overflow: visible; }
.defs { position: absolute; width: 0; height: 0; }

.app { position: relative; width: 2880px; height: 1703px; display: flex; flex-direction: column; border-bottom: 2px solid #3a88ea; }

/* title bar */
.titlebar { height: 31px; flex: none; display: flex; align-items: flex-start; padding-left: 7px; padding-right: 5px; color: #eaf5ff; font-size: 16px; background: linear-gradient(#4cb9ff, #3590ff); border-bottom: 1px solid #58a5ff; }
.logo { width: 20px; height: 21px; margin-top: 5px; }
.title { margin-left: 12px; line-height: 34px; white-space: nowrap; flex: 1; }
.account { display: flex; }
.book { width: 16px; height: 18px; margin: 5px 6px 0 0; }
.help { line-height: 32px; width: 73px; white-space: nowrap; }
.user { width: 16px; height: 16px; margin: 8px 4px 0 0; }
.admin { line-height: 32px; width: 128px; white-space: nowrap; text-decoration: underline; text-underline-offset: 3px; margin-right: 39px; }
.menu { width: 72px; height: 26px; margin-top: 2px; border: 1px solid #1e66c8; border-radius: 3px; line-height: 25px; padding-left: 9px; background: linear-gradient(#56c4ff, #3b98ff); display: flex; align-items: center; }
.menu i { margin-left: 11px; border: 5px solid transparent; border-top: 8px solid #fff; border-bottom: 0; }
.winbtns { margin: 2px 0 0 8px; height: 26px; width: 104px; display: flex; border: 1px solid #1e66c8; border-radius: 3px; background: linear-gradient(#56c4ff, #3b98ff); }
.winbtns span { width: 29px; border-right: 1px solid #1e66c8; display: grid; place-items: center; }
.winbtns .wide { flex: 1; border: 0; }
.winbtns svg { width: 12px; height: 12px; }

/* navigation */
.nav { height: 50px; flex: none; display: flex; position: relative; background: linear-gradient(100deg, #1180fc 0%, #0f7dff 20%, #1587ff 40%, #0f80ff 75%, #178cff 95%); border-bottom: 1px solid #0e6ce0; color: #fff; font-size: 22px; font-weight: 500; }
.main { display: flex; align-items: center; line-height: 49px; white-space: nowrap; padding-top: 1px; }
.m1 { padding-left: 14px; width: 146px; gap: 7px; }
.m2 { padding-left: 14px; width: 155px; gap: 6px; }
.m3 { padding-left: 12px; width: 146px; gap: 10px; }
.m4 { padding-left: 21px; width: 153px; gap: 6px; }
.m5 { padding-left: 15px; width: 186px; gap: 8px; border-right: 1px solid #3a9aff; }
.m1 svg { width: 26px; height: 24px; } .m2 svg { width: 28px; height: 25px; } .m3 svg { width: 23px; height: 27px; }
.m4 svg { width: 26px; height: 28px; } .m5 svg { width: 26px; height: 23px; }
.active { color: #fdf500; background: linear-gradient(#0f7cf8 0, #1180f4 45%, #10a8f8 75%, #10d0fa); }
.tools { display: flex; gap: 8px; margin-left: 48px; padding-top: 11px; }
.tool { height: 30px; border-radius: 3px; background: linear-gradient(#eaf2ff, #b9d6fb); color: #222; font-size: 16px; font-weight: 400; line-height: 30px; display: flex; align-items: center; white-space: nowrap; box-shadow: 0 1px 1px #0b3f88; }
.tool svg { width: 20px; height: 20px; }
.t1 { width: 122px; padding-left: 8px; gap: 6px; } .t2 { width: 89px; padding-left: 9px; gap: 5px; }
.t3 { width: 89px; padding-left: 8px; gap: 6px; } .t4 { width: 127px; padding-left: 7px; gap: 10px; }
.t5 { width: 127px; padding-left: 8px; gap: 5px; } .t6 { width: 143px; padding-left: 7px; gap: 7px; }
.tool.t5 svg { width: 24px; } .tool.t6 svg { width: 22px; }

/* toolbar */
.toolbar { height: 60px; flex: none; padding: 10px 20px 0 20px; display: flex; border: 0 solid #3a88ea; border-width: 0 2px; background: #fff; box-shadow: inset 0 -1px #d4d4d4; }
.field { border: 1px solid #d6d6d6; border-radius: 4px; height: 40px; display: flex; align-items: center; justify-content: space-between; font-size: 15px; color: #9a9a9a; background: #fff; padding: 0 7px 0 9px; white-space: nowrap; }
.field .mag { width: 17px; height: 17px; color: #555; }
.global { width: 340px; color: #bbb; margin-right: 12px; }
.global span { flex: 1; }
.global .mag { width: 26px; height: 20px; padding: 2px 1px 2px 9px; border-left: 1px solid #ddd; color: #888; }
.btn { height: 40px; border: 1px solid #dadada; border-radius: 4px; margin-right: 12px; display: flex; align-items: center; white-space: nowrap; }
.b1 { width: 96px; padding-left: 7px; gap: 5px; } .b1 svg { width: 14px; height: 14px; }
.b2 { width: 96px; padding-left: 18px; gap: 5px; } .b2 svg { width: 20px; height: 20px; }
.b3 { width: 160px; padding-left: 16px; gap: 5px; } .b3 svg { width: 18px; height: 18px; }
.reports { margin-left: auto; display: flex; gap: 12px; }
.rep { width: 140px; height: 40px; border: 1px solid #c8e6d8; border-radius: 4px; background: #e6f4ee; padding-left: 15px; display: flex; align-items: center; gap: 5px; white-space: nowrap; }
.rep svg { width: 20px; height: 22px; }
.rep.off { background: #fbfbfb; border-color: #d9d9d9; color: #bdbdbd; }
.rep.blue { background: #e2f3fe; border-color: #b3dffb; }

/* body */
.body { flex: 1; min-height: 0; display: flex; border: 0 solid #3a88ea; border-width: 0 2px; }
.side { width: 382px; flex: none; display: flex; flex-direction: column; }
.sidetabs { height: 50px; flex: none; display: flex; border-bottom: 1px solid #d4d4d4; padding-left: 20px; font-size: 16px; color: #444; }
.sidetabs span { width: 76px; margin-right: 13px; padding-left: 6px; line-height: 54px; height: 50px; white-space: nowrap; }
.sidetabs .on { color: #1f6ff0; font-weight: 600; border-bottom: 3px solid #1f6ff0; }
.listbtn { width: 26px; height: 26px; border: 1px solid #d9d9d9; border-radius: 3px; margin: 11px 17px 0 10px; display: grid; place-items: center; }
.listbtn svg { width: 10px; height: 10px; }
.sidetabs .mag { width: 18px; height: 18px; margin-top: 16px; color: #555; }
.tree { position: relative; flex: 1; min-height: 0; overflow: hidden; padding-top: 3px; background: linear-gradient(#f2f2f2, #f2f2f2) 7px 3px / 2px 100% no-repeat; }
.d1 { --d: 17px; } .d2 { --d: 34px; } .d3 { --d: 51px; } .d4 { --d: 68px; } .d5 { --d: 85px; } .d6 { --d: 102px; }
.tree li { background: linear-gradient(#f2f2f2, #f2f2f2) calc(7px + var(--d)) 0 / 2px 100% no-repeat; }
.tree li:last-child { background-image: none; }
.tree .end:last-child { background: linear-gradient(#f2f2f2, #f2f2f2) calc(7px + var(--d)) 0 / 2px 17px no-repeat; }
.row { height: 32px; display: flex; align-items: center; padding-left: calc(3px + var(--d)); line-height: 32px; white-space: nowrap; width: 374px; background: linear-gradient(#f0f0f0, #f0f0f0) calc(8px + var(--d)) 16px / 9px 1px no-repeat; }
.row span { line-height: 34px; padding-top: 1px; letter-spacing: .12px; word-spacing: 1px; }
.row svg { width: 20px; height: 20px; margin: 0 6px; }
.row em { color: #f00; }
.tw { width: 10px; margin-right: 7px; flex: none; }
.open > .tw { height: 7px; background: #555; clip-path: polygon(0 0, 100% 0, 62% 100%, 38% 100%); }
.shut > .tw { height: 11px; background: #555; clip-path: polygon(20% 0, 95% 50%, 20% 100%); }
.cb { width: 16px; height: 16px; flex: none; border: 1px solid #a9bbd0; border-radius: 2px; background: #fff; }
.cb.big { width: 17px; height: 17px; }
.row.sel { background-color: rgba(31, 90, 170, .16); color: #2472f0; box-shadow: inset 4px 0 #1f6ff0; }
.row.sel svg { filter: hue-rotate(22deg) brightness(.84); }
.scroll { position: absolute; right: 0; top: 319px; width: 8px; height: 1142px; background: #e3e3e3; border-radius: 4px; }

.work { flex: 1; min-width: 0; display: flex; flex-direction: column; }
.tabs { height: 50px; flex: none; display: flex; border-left: 1px solid #d4d4d4; }
.tab { height: 50px; display: flex; align-items: center; padding: 2px 13px 0 10px; background: #edeef3; border-right: 1px solid #d4d4d4; border-bottom: 1px solid #d4d4d4; white-space: nowrap; line-height: 20px; }
.tab .doc { width: 16px; height: 18px; color: #555; margin: -2px 9px 0 0; }
.tab .x { width: 14px; height: 14px; margin: 0 0 0 auto; }
.tab.on { background: #fff; border-bottom-color: #fff; color: #2472f0; }
.tab.on .doc { color: #1f6ff0; }
.w140 { width: 140px; } .w142 { width: 142px; } .w178 { width: 178px; } .w152 { width: 152px; } .w176 { width: 176px; }
.rest { flex: 1; border-bottom: 1px solid #d4d4d4; }
.panes { flex: 1; min-height: 0; display: flex; }

/* contacts */
.contacts { width: 470px; flex: none; display: flex; flex-direction: column; border: 0 solid #d4d4d4; border-width: 0 1px; }
.chead { height: 70px; flex: none; border-bottom: 1px solid #d4d4d4; padding: 14px 0 0 19px; display: flex; }
.chead .field { width: 386px; }
.sort { width: 23px; height: 20px; margin: 10px 0 0 20px; }
.clist { position: relative; flex: 1; padding: 20px 0 0; background: linear-gradient(#deebfd, #e7effd 130px, #f2f6fe 360px, #fff 600px); }
.card { position: relative; width: 426px; height: 78px; margin-left: 21px; border-radius: 4px; background: linear-gradient(100deg, #78abfb, #4c8ff7 45%, #2472f3 80%); box-shadow: 0 2px 5px rgba(40, 110, 230, .4); display: flex; }
.waves { position: absolute; left: 0; top: 0; width: 426px; height: 78px; overflow: hidden; }
.face { width: 62px; height: 62px; margin: 10px 10px 0 11px; position: relative; }
.who { position: relative; color: #fff; padding-top: 14px; display: flex; flex-direction: column; }
.who b { font-size: 18px; line-height: 25px; }
.who span { line-height: 24px; margin-top: 4px; color: #e9f2ff; letter-spacing: .1px; }
.badge { position: absolute; left: 352px; top: -6px; width: 81px; height: 28px; background: #ffc53d; border-radius: 0 0 0 13px; padding-left: 13px; line-height: 29px; white-space: nowrap; }
.badge::after { content: ""; position: absolute; right: 0; top: 28px; width: 7px; height: 7px; background: #a86b0c; clip-path: polygon(0 0, 100% 0, 0 100%); }
.people { margin-top: 36px; }
.people li { height: 40px; display: flex; align-items: center; padding-left: 20px; line-height: 40px; white-space: nowrap; background: linear-gradient(#dfe5ee80, #dfe5ee80) 7px 0 / 2px 100% no-repeat, linear-gradient(#dfe5ee80, #dfe5ee80) 9px 20px / 8px 1px no-repeat; }
.people .end { background-size: 2px 20px, 8px 1px; }
.people span { margin-left: 6px; line-height: 41px; letter-spacing: .11px; word-spacing: .6px; }
.people .sel { background-color: #e1ebfc; color: #2472f0; box-shadow: inset 4px 0 #1f6ff0; }
.handle { position: absolute; left: -1px; top: 623px; width: 10px; height: 73px; border: 1px solid #d4d4d4; border-radius: 0 4px 4px 0; background: #fff; }
.handle::after { content: ""; position: absolute; left: 3px; top: 32px; width: 5px; height: 7px; background: #555; clip-path: polygon(100% 0, 100% 100%, 0 50%); }

/* chat */
.chat { flex: 1; min-width: 0; display: flex; flex-direction: column; }
.chathead { height: 70px; flex: none; border-bottom: 1px solid #d4d4d4; padding: 15px 11px 0 10px; display: flex; justify-content: space-between; }
.chathead .field { width: 260px; }
.acts { display: flex; align-items: flex-start; }
.act { height: 31px; border: 1px solid #e2e2e2; border-left-color: #f4f4f4; border-top-color: #f4f4f4; border-radius: 4px; display: grid; place-items: center; margin-top: 4px; }
.act svg { width: 16px; height: 16px; }
.a1 { width: 31px; margin-right: 11px; } .a2 { width: 31px; margin-right: 11px; } .a3 { width: 37px; margin-right: 11px; } .a4 { width: 37px; margin-right: 10px; }
.a5 { width: 33px; margin-right: 14px; background: #eeebff; border-color: #d5ccfb; }
.a6 { width: 26px; height: 26px; margin-top: 7px; border-color: #d9d9d9; }
.a6 svg { width: 12px; height: 12px; }
.stage { flex: 1; background: #f1f1f1; padding-left: 412px; box-shadow: inset 0 1px 2px #e6e6e6; }
.thread { width: 1200px; height: 100%; background: #f5f5f5; border: 0 solid #d4d4d4; border-width: 0 1px; }
.notice { position: relative; height: 96px; padding-top: 27px; text-align: center; font-size: 13px; color: #666; line-height: 20px; }
.notice .cb { position: absolute; left: 40px; top: 36px; }
.notice p { margin: 0; position: relative; left: 22px; white-space: nowrap; }
.notice time { position: relative; left: 26px; font-size: 12.4px; }
.msg { height: 235px; display: flex; justify-content: flex-end; padding: 13px 40px 0 0; align-items: flex-start; }
.col { display: flex; flex-direction: column; align-items: flex-end; width: 300px; margin-right: 7px; }
.from { height: 20px; line-height: 11px; font-size: 13px; margin-right: 4px; color: #333; white-space: nowrap; }
.from span { color: #999; font-size: 12.2px; letter-spacing: .05px; margin-right: 5px; }
.bubble { position: relative; background: #9eea6a; border-radius: 5px; font-size: 14.6px; line-height: 24px; padding: 6px 11px; margin-right: 4px; white-space: nowrap; }
.bubble::after { content: ""; position: absolute; right: -4px; top: 12px; width: 4px; height: 8px; background: #9eea6a; clip-path: polygon(0 0, 100% 50%, 0 100%); }
.msg time { font-size: 12.4px; line-height: 16px; color: #666; margin-top: 7px; margin-right: -1px; }
.man { width: 49px; height: 49px; margin-top: -1px; }
.msg .cb { margin: 14px 0 0 20px; }
.count { height: 49px; flex: none; border-top: 1px solid #d4d4d4; padding-left: 10px; line-height: 51px; }

/* overlays */
.marker { position: absolute; left: 2010px; top: 344px; width: 436px; height: 1028px; border: 8px solid #fb3838; border-radius: 8px; }
.upload { position: absolute; left: 2426px; top: 234px; width: 258px; height: 74px; border: 1px solid #1690ff; border-radius: 14px; background: #f0f8ff; display: flex; align-items: center; font-size: 26px; font-weight: 700; color: #06a7ff; }
.upload .pan { width: 73px; height: 74px; margin: -1px 14px -1px -1px; border-radius: 14px; background: linear-gradient(20deg, #35b2ff, #0a92ff 50%); display: grid; place-items: center; }
.upload svg { width: 42px; height: 38px; }
```
